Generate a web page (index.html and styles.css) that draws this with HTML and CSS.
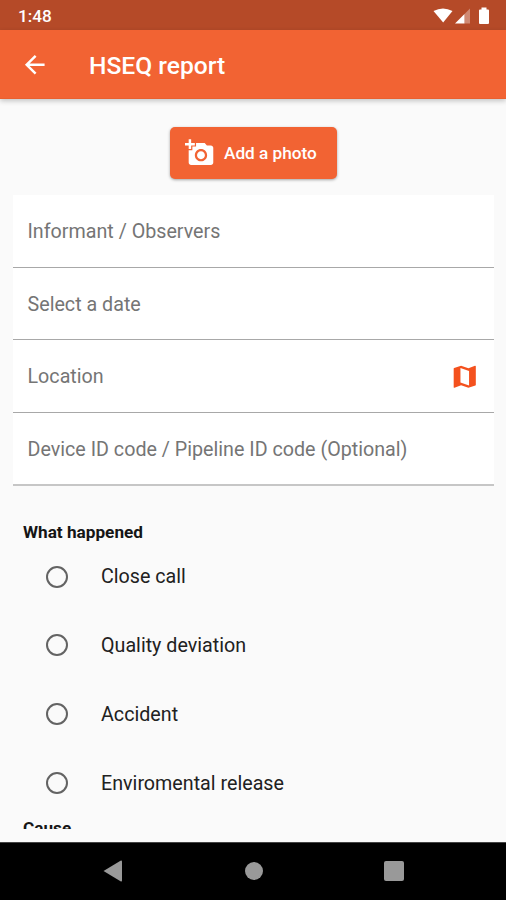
FILE: index.html
```html
<!DOCTYPE html>
<html lang="en">
<head>
<meta charset="utf-8">
<title>HSEQ report</title>
<link rel="stylesheet" href="styles.css">
</head>
<body>
<div class="screen">
  <div class="status">
    <span class="clock">1:48</span>
    <svg class="status-icons" viewBox="0 0 58 18" width="58" height="18">
      <path fill="#fff" d="M0.500 4Q10-1 19.500 4L10.200 15.500Z"/>
      <path fill="#fff" d="M22 16.500L31.500 7V16.500Z"/>
      <path fill="#fff" fill-opacity=".35" d="M31.500 7L37 1.500V16.500H31.500Z"/>
      <path fill="#fff" d="M46 3.500Q46 2.500 47 2.500H48.500V.5H53.500V2.500H55Q56 2.500 56 3.500V16Q56 17 55 17H47Q46 17 46 16Z"/>
    </svg>
  </div>
  <header class="appbar">
    <svg class="back" viewBox="0 0 24 24"><path fill="#fff" d="M20 11H7.830l5.590-5.590L12 4l-8 8 8 8 1.410-1.410L7.830 13H20v-2z"/></svg>
    <h1 class="title">HSEQ report</h1>
  </header>
  <main class="content">
    <button class="photo">
      <svg class="camera" viewBox="0 0 24 24"><path fill="#fff" d="M3 4V1h2v3h3v2H5v3H3V6H0V4h3zm3 6V7h3V4h7l1.830 2H21c1.100 0 2 .9 2 2v12c0 1.100-.9 2-2 2H5c-1.100 0-2-.9-2-2V10h3zm7 9c2.760 0 5-2.240 5-5s-2.240-5-5-5-5 2.240-5 5 2.240 5 5 5zm-3.200-5c0 1.770 1.430 3.200 3.200 3.200s3.200-1.430 3.200-3.200-1.430-3.200-3.200-3.200-3.200 1.430-3.200 3.200z"/></svg>
      <span class="photo-label">Add a photo</span>
    </button>
    <div class="fields">
      <div class="field"><span>Informant / Observers</span></div>
      <div class="field"><span>Select a date</span></div>
      <div class="field"><span>Location</span>
        <svg class="map" viewBox="0 0 24 24"><path fill="#f4511e" d="M20.500 3l-.16.030L15 5.100 9 3 3.360 4.900c-.21.070-.36.250-.36.480V20.500c0 .28.220.5.500.5l.16-.030L9 18.900l6 2.100 5.640-1.900c.21-.070.360-.25.360-.48V3.500c0-.28-.22-.5-.5-.5zM15.500 19.200l-7-2.450V4.800l7 2.450V19.200z"/></svg>
      </div>
      <div class="field"><span>Device ID code / Pipeline ID code (Optional)</span></div>
    </div>
    <h2 class="heading">What happened</h2>
    <div class="options">
      <div class="option"><i class="radio"></i><span>Close call</span></div>
      <div class="option"><i class="radio"></i><span>Quality deviation</span></div>
      <div class="option"><i class="radio"></i><span>Accident</span></div>
      <div class="option"><i class="radio"></i><span>Enviromental release</span></div>
    </div>
    <h2 class="heading">Cause</h2>
  </main>
  <nav class="nav">
    <svg viewBox="0 0 20 22" width="20" height="22"><path fill="#999" d="M0.500 11L17.500.8Q19 .2 19 1.500V20.500Q19 21.800 17.500 21.200Z"/></svg>
    <i class="home"></i>
    <i class="recent"></i>
  </nav>
</div>
</body>
</html>
```

FILE: styles.css
```css
* { box-sizing: border-box; }
body { margin: 0; background: #fafafa; font-family: Roboto, sans-serif; }
.screen { width: 506px; height: 900px; display: flex; flex-direction: column; overflow: hidden; }
.status { height: 30px; flex: none; background: #b54a28; display: flex; align-items: center; justify-content: space-between; padding: 1px 15px 0 18px; }
.clock { color: #fff; font-size: 17.200px; font-weight: 500; }
.appbar { height: 69px; flex: none; background: #f26333; display: flex; align-items: center; padding: 1px 0 0 20px; border-bottom: 1px solid #e9602f; box-shadow: 0 2px 5px rgba(0,0,0,.22); position: relative; }
.back { width: 29.500px; height: 29.500px; }
.title { margin: 2px 0 0 39.500px; color: #fff; font-size: 24.600px; font-weight: 500; line-height: 30px; }
.content { height: 730px; flex: none; overflow: hidden; padding: 28px 12px 0 12.500px; }
.photo { display: flex; align-items: center; width: 167.500px; height: 52px; margin: 0 auto 16px; padding: 0 0 0 15px; border: 0; border-radius: 5px; background: #f26333; box-shadow: 0 1px 3px rgba(0,0,0,.35); color: #fff; font-family: inherit; }
.camera { width: 29.500px; height: 29.500px; flex: none; }
.photo-label { margin-left: 10px; font-size: 17.200px; font-weight: 500; white-space: nowrap; }
.fields { background: #fff; margin-bottom: 36px; }
.field { height: 72.700px; display: flex; align-items: center; justify-content: space-between; padding: 1px 15px 0; border-bottom: 1px solid #a8a8a8; font-size: 19.700px; color: #757575; white-space: nowrap; }
.field:last-child { border-bottom: 2px solid #c6c6c6; height: 73px; }
.map { width: 29.500px; height: 29.500px; }
.heading { margin: 0 0 0 10.500px; font-size: 17.200px; line-height: 20px; font-weight: 700; color: #151515; }
.options { height: 275.500px; }
.option { height: 68.900px; display: flex; align-items: center; font-size: 19.700px; color: #212121; white-space: nowrap; }
.radio { width: 22px; height: 22px; border: 2px solid #636363; border-radius: 50%; margin: 0 33px 0 33.500px; }
.nav { margin-top: 13px; height: 58px; flex: none; background: #000; border-top: 1px solid #444; display: flex; align-items: center; padding: 0 0 2px 102.500px; }
.home { width: 18px; height: 18px; border-radius: 50%; background: #999; margin-left: 122px; }
.recent { width: 20px; height: 20px; border-radius: 2px; background: #999; margin-left: 121px; }
```
